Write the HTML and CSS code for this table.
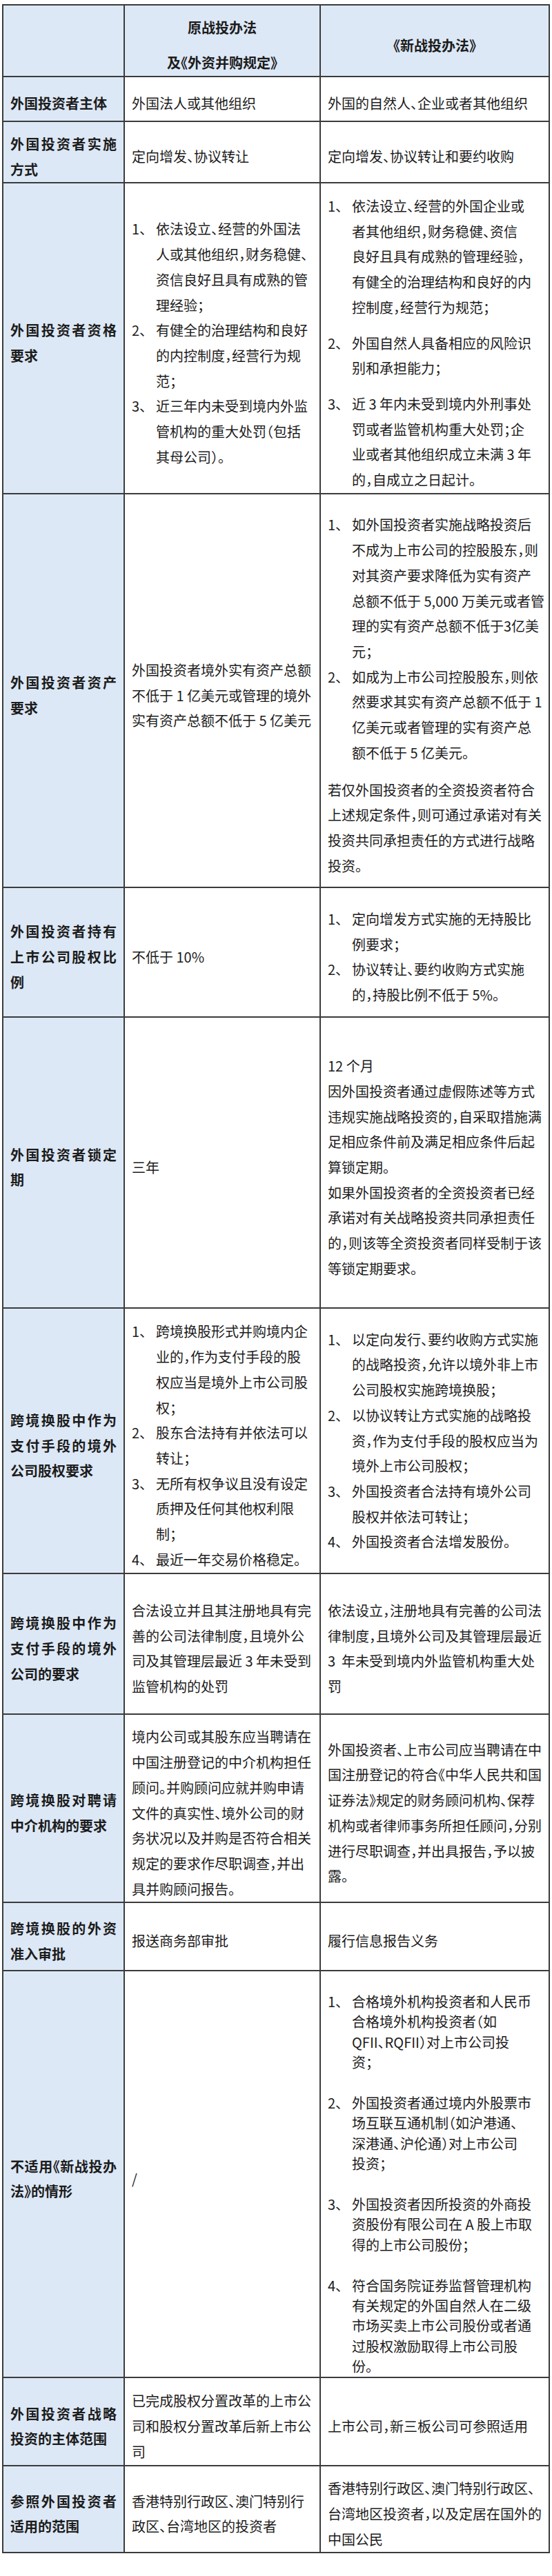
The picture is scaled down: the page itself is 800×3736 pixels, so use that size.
FILE: index.html
```html
<!DOCTYPE html>
<html lang="zh-CN">
<head>
<meta charset="utf-8">
<title>原战投办法与新战投办法对比</title>
<link rel="stylesheet" href="styles.css">
</head>
<body>
<div class="page">
<table class="cmp">
  <colgroup><col class="c1"><col class="c2"><col class="c3"></colgroup>
  <tr class="r1 head">
    <th class="hd-empty"></th>
    <th><div class="hd-l">原战投办法</div><div class="hd-l">及《外资并购规定》</div></th>
    <th>《新战投办法》</th>
  </tr>
  <tr class="r2">
    <th class="lab">外国投资者主体</th>
    <td class="txt">外国法人或其他组织</td>
    <td class="txt">外国的自然人、企业或者其他组织</td>
  </tr>
  <tr class="r3">
    <th class="lab">外国投资者实施方式</th>
    <td class="txt">定向增发、协议转让</td>
    <td class="txt">定向增发、协议转让和要约收购</td>
  </tr>
  <tr class="r4">
    <th class="lab">外国投资者资格要求</th>
    <td class="txt">
      <div class="it"><span class="no">1、</span><span>依法设立、经营的外国法<br>人或其他组织，财务稳健、<br>资信良好且具有成熟的管<br>理经验；</span></div>
      <div class="it"><span class="no">2、</span><span>有健全的治理结构和良好<br>的内控制度，经营行为规<br>范；</span></div>
      <div class="it"><span class="no">3、</span><span>近三年内未受到境内外监<br>管机构的重大处罚（包括<br>其母公司）。</span></div>
    </td>
    <td class="txt spaced">
      <div class="it"><span class="no">1、</span><span>依法设立、经营的外国企业或<br>者其他组织，财务稳健、资信<br>良好且具有成熟的管理经验，<br>有健全的治理结构和良好的内<br>控制度，经营行为规范；</span></div>
      <div class="it"><span class="no">2、</span><span>外国自然人具备相应的风险识<br>别和承担能力；</span></div>
      <div class="it"><span class="no">3、</span><span>近 3 年内未受到境内外刑事处<br>罚或者监管机构重大处罚；企<br>业或者其他组织成立未满 3 年<br>的，自成立之日起计。</span></div>
    </td>
  </tr>
  <tr class="r5">
    <th class="lab">外国投资者资产要求</th>
    <td class="txt">外国投资者境外实有资产总额<br>不低于 1 亿美元或管理的境外<br>实有资产总额不低于 5 亿美元</td>
    <td class="txt">
      <div class="it"><span class="no">1、</span><span>如外国投资者实施战略投资后<br>不成为上市公司的控股股东，则<br>对其资产要求降低为实有资产<br>总额不低于 5,000 万美元或者管<br>理的实有资产总额不低于3亿美<br>元；</span></div>
      <div class="it"><span class="no">2、</span><span>如成为上市公司控股股东，则依<br>然要求其实有资产总额不低于 1<br>亿美元或者管理的实有资产总<br>额不低于 5 亿美元。</span></div>
      <p class="para">若仅外国投资者的全资投资者符合<br>上述规定条件，则可通过承诺对有关<br>投资共同承担责任的方式进行战略<br>投资。</p>
    </td>
  </tr>
  <tr class="r6">
    <th class="lab">外国投资者持有上市公司股权比例</th>
    <td class="txt">不低于 10%</td>
    <td class="txt">
      <div class="it"><span class="no">1、</span><span>定向增发方式实施的无持股比<br>例要求；</span></div>
      <div class="it"><span class="no">2、</span><span>协议转让、要约收购方式实施<br>的，持股比例不低于 5%。</span></div>
    </td>
  </tr>
  <tr class="r7">
    <th class="lab">外国投资者锁定期</th>
    <td class="txt">三年</td>
    <td class="txt spaced">
      <p>12 个月</p>
      <p>因外国投资者通过虚假陈述等方式<br>违规实施战略投资的，自采取措施满<br>足相应条件前及满足相应条件后起<br>算锁定期。</p>
      <p>如果外国投资者的全资投资者已经<br>承诺对有关战略投资共同承担责任<br>的，则该等全资投资者同样受制于该<br>等锁定期要求。</p>
    </td>
  </tr>
  <tr class="r8">
    <th class="lab">跨境换股中作为支付手段的境外公司股权要求</th>
    <td class="txt">
      <div class="it"><span class="no">1、</span><span>跨境换股形式并购境内企<br>业的，作为支付手段的股<br>权应当是境外上市公司股<br>权；</span></div>
      <div class="it"><span class="no">2、</span><span>股东合法持有并依法可以<br>转让；</span></div>
      <div class="it"><span class="no">3、</span><span>无所有权争议且没有设定<br>质押及任何其他权利限<br>制；</span></div>
      <div class="it"><span class="no">4、</span><span>最近一年交易价格稳定。</span></div>
    </td>
    <td class="txt flat">
      <div class="it"><span class="no">1、</span><span>以定向发行、要约收购方式实施<br>的战略投资，允许以境外非上市<br>公司股权实施跨境换股；</span></div>
      <div class="it"><span class="no">2、</span><span>以协议转让方式实施的战略投<br>资，作为支付手段的股权应当为<br>境外上市公司股权；</span></div>
      <div class="it"><span class="no">3、</span><span>外国投资者合法持有境外公司<br>股权并依法可转让；</span></div>
      <div class="it"><span class="no">4、</span><span>外国投资者合法增发股份。</span></div>
    </td>
  </tr>
  <tr class="r9">
    <th class="lab">跨境换股中作为支付手段的境外公司的要求</th>
    <td class="txt">合法设立并且其注册地具有完<br>善的公司法律制度，且境外公<br>司及其管理层最近 3 年未受到<br>监管机构的处罚</td>
    <td class="txt">依法设立，注册地具有完善的公司法<br>律制度，且境外公司及其管理层最近<br>3&nbsp;&nbsp;年未受到境内外监管机构重大处<br>罚</td>
  </tr>
  <tr class="r10">
    <th class="lab">跨境换股对聘请中介机构的要求</th>
    <td class="txt">境内公司或其股东应当聘请在<br>中国注册登记的中介机构担任<br>顾问。并购顾问应就并购申请<br>文件的真实性、境外公司的财<br>务状况以及并购是否符合相关<br>规定的要求作尽职调查，并出<br>具并购顾问报告。</td>
    <td class="txt">外国投资者、上市公司应当聘请在中<br>国注册登记的符合《中华人民共和国<br>证券法》规定的财务顾问机构、保荐<br>机构或者律师事务所担任顾问，分别<br>进行尽职调查，并出具报告，予以披<br>露。</td>
  </tr>
  <tr class="r11">
    <th class="lab">跨境换股的外资准入审批</th>
    <td class="txt">报送商务部审批</td>
    <td class="txt">履行信息报告义务</td>
  </tr>
  <tr class="r12">
    <th class="lab">不适用《新战投办法》的情形</th>
    <td class="txt">/</td>
    <td class="txt tight">
      <div class="it"><span class="no">1、</span><span>合格境外机构投资者和人民币<br>合格境外机构投资者（如<br>QFII、RQFII）对上市公司投<br>资；</span></div>
      <div class="it"><span class="no">2、</span><span>外国投资者通过境内外股票市<br>场互联互通机制（如沪港通、<br>深港通、沪伦通）对上市公司<br>投资；</span></div>
      <div class="it"><span class="no">3、</span><span>外国投资者因所投资的外商投<br>资股份有限公司在 A 股上市取<br>得的上市公司股份；</span></div>
      <div class="it"><span class="no">4、</span><span>符合国务院证券监督管理机构<br>有关规定的外国自然人在二级<br>市场买卖上市公司股份或者通<br>过股权激励取得上市公司股<br>份。</span></div>
    </td>
  </tr>
  <tr class="r13">
    <th class="lab">外国投资者战略投资的主体范围</th>
    <td class="txt">已完成股权分置改革的上市公<br>司和股权分置改革后新上市公<br>司</td>
    <td class="txt">上市公司，新三板公司可参照适用</td>
  </tr>
  <tr class="r14">
    <th class="lab">参照外国投资者适用的范围</th>
    <td class="txt">香港特别行政区、澳门特别行<br>政区、台湾地区的投资者</td>
    <td class="txt">香港特别行政区、澳门特别行政区、<br>台湾地区投资者，以及定居在国外的<br>中国公民</td>
  </tr>
</table>
</div>
</body>
</html>
```

FILE: styles.css
```css
html, body {
  margin: 0;
  padding: 0;
  background: #ffffff;
}

body {
  font-family: "Noto Sans CJK SC", "Noto Sans", sans-serif;
  font-size: 20px;
  color: #1c1c1c;
  font-feature-settings: "halt";
}

.page {
  padding: 6px 0 0 3px;
}

.cmp {
  border-collapse: collapse;
  table-layout: fixed;
  width: 792px;
}

.c1 { width: 176px; }
.c2 { width: 284px; }
.c3 { width: 332px; }

.cmp th,
.cmp td {
  border: 2px solid #3b3b3b;
  padding: 14px 10px 0;
  vertical-align: middle;
  line-height: 36.7px;
  text-align: left;
  font-weight: 400;
}

.cmp p {
  margin: 0;
}

.head th {
  background: #dce8f6;
  font-weight: 700;
  text-align: center;
}

.hd-l + .hd-l {
  margin-top: 14px;
}

.cmp .lab {
  background: #dce8f6;
  font-weight: 700;
  text-align: justify;
}

.txt {
  white-space: nowrap;
}

.it {
  display: flex;
}

.no {
  flex: 0 0 35px;
}

.spaced > * + * {
  margin-top: 15px;
}

.para {
  margin-top: 17px !important;
}

.cmp td.flat {
  padding-top: 0;
}

.cmp td.tight {
  line-height: 29.4px;
  padding-top: 28px;
}

.tight > * + * {
  margin-top: 29.4px;
}

.r1 { height: 104px; }
.r2 { height: 65px; }
.r3 { height: 89px; }
.r4 { height: 451px; }
.r5 { height: 571px; }
.r6 { height: 188px; }
.r7 { height: 422px; }
.r8 { height: 385px; }
.r9 { height: 204px; }
.r10 { height: 271px; }
.r11 { height: 99px; }
.r12 { height: 590px; }
.r13 { height: 128px; }
.r14 { height: 125px; }
```
